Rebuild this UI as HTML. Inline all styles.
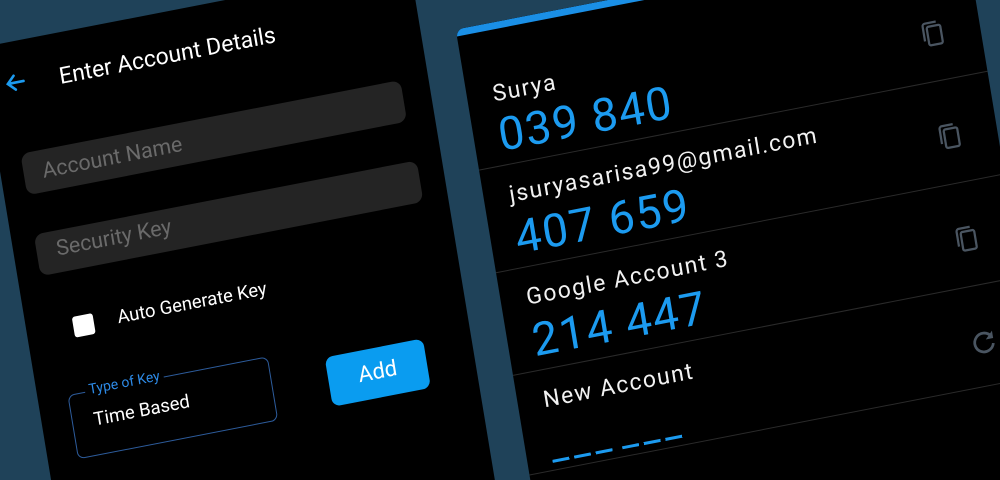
<!DOCTYPE html>
<html><head><meta charset="utf-8"><style>
html,body{margin:0;padding:0;width:1000px;height:480px;overflow:hidden;}
body{background:#1f4259;position:relative;font-family:"Roboto","Liberation Sans",sans-serif;}
#clip{position:absolute;left:0;top:0;width:1000px;height:480px;overflow:hidden;}
#w{position:absolute;left:0;top:0;width:1000px;height:480px;transform-origin:0 0;transform:matrix(0.9816,-0.1908,0.1633,0.9866,0,0);}
.a{position:absolute;}
.lp{left:-28px;top:43px;width:438px;height:620px;background:#000;}
.rp{left:445px;top:116px;width:518px;height:560px;background:#000;border-top-left-radius:8px;overflow:hidden;}
.field{background:#242424;border-radius:9px;height:42px;}
.ph{color:#6a6a6a;font-size:21.5px;white-space:nowrap;}
.div{left:0;width:518px;height:1px;background:#2a2a2a;}
.nm{color:#f2f2f2;font-size:23px;letter-spacing:1.5px;white-space:nowrap;line-height:1;}
.cd{color:#1c9bf0;font-size:46px;letter-spacing:1.5px;white-space:nowrap;line-height:1;}
.ic{width:30px;height:30px;}
</style></head><body>
<div id="clip">
<div id="w">
  <div class="a lp"></div>
  <svg class="a" style="left:-9px;top:73px" width="22" height="22" viewBox="0 0 22 22"><path d="M19 11H4M10 4L3 11l7 7" stroke="#1c9bf0" stroke-width="2.6" fill="none" stroke-linecap="round"/></svg>
  <div class="a" style="left:46px;top:73px;color:#fff;font-size:23px;white-space:nowrap;">Enter Account Details</div>
  <div class="a field" style="left:-5px;top:155px;width:387px;"></div>
  <div class="a ph" style="left:14px;top:164px;">Account Name</div>
  <div class="a field" style="left:-5px;top:237px;width:390px;"></div>
  <div class="a ph" style="left:15px;top:243px;">Security Key</div>
  <div class="a" style="left:19px;top:325px;width:21px;height:21px;background:#fff;border-radius:3px;"></div>
  <div class="a" style="left:64px;top:323px;color:#fff;font-size:18.5px;white-space:nowrap;">Auto Generate Key</div>
  <div class="a" style="left:2px;top:401px;width:202px;height:63px;border:1px solid #2d5c9c;border-radius:7px;"></div>
  <div class="a" style="left:20px;top:392px;background:#000;padding:0 4px;color:#2d8ae6;font-size:14px;white-space:nowrap;">Type of Key</div>
  <div class="a" style="left:24px;top:419px;color:#fff;font-size:18.5px;white-space:nowrap;">Time Based</div>
  <div class="a" style="left:262px;top:413px;width:100px;height:50px;background:#0a9cf0;border-radius:8px;color:#fff;font-size:22px;text-align:center;line-height:50px;">Add</div>

  <div class="a rp">
    <div class="a" style="left:0;top:0;width:518px;height:7px;background:#1a8fe6;"></div>
    <div class="a div" style="top:142px"></div>
    <div class="a div" style="top:246px"></div>
    <div class="a div" style="top:350px"></div>
    <div class="a div" style="top:451px"></div>
    <div class="a nm" style="left:26px;top:59px">Surya</div>
    <div class="a cd" style="left:25px;top:90px">039 840</div>
    <div class="a nm" style="left:26px;top:161px">jsuryasarisa99@gmail.com</div>
    <div class="a cd" style="left:25px;top:194px">407 659</div>
    <div class="a nm" style="left:26px;top:265px">Google Account 3</div>
    <div class="a cd" style="left:25px;top:298px">214 447</div>
    <div class="a nm" style="left:26px;top:369px">New Account</div>
    <div class="a" style="left:25px;top:441px;width:62px;height:3px;background:repeating-linear-gradient(90deg,#1c9bf0 0 17px,transparent 17px 22px);"></div>
    <div class="a" style="left:96px;top:441px;width:62px;height:3px;background:repeating-linear-gradient(90deg,#1c9bf0 0 17px,transparent 17px 22px);"></div>
    <svg class="a ic" style="left:455px;top:80px" viewBox="0 0 24 24"><path d="M5 17V5a2 2 0 0 1 2-2h9" stroke="#4a5561" stroke-width="1.8" fill="none"/><rect x="8" y="6" width="11" height="15" rx="1.5" stroke="#4a5561" stroke-width="1.8" fill="none"/></svg>
    <svg class="a ic" style="left:455px;top:184px" viewBox="0 0 24 24"><path d="M5 17V5a2 2 0 0 1 2-2h9" stroke="#4a5561" stroke-width="1.8" fill="none"/><rect x="8" y="6" width="11" height="15" rx="1.5" stroke="#4a5561" stroke-width="1.8" fill="none"/></svg>
    <svg class="a ic" style="left:455px;top:288px" viewBox="0 0 24 24"><path d="M5 17V5a2 2 0 0 1 2-2h9" stroke="#4a5561" stroke-width="1.8" fill="none"/><rect x="8" y="6" width="11" height="15" rx="1.5" stroke="#4a5561" stroke-width="1.8" fill="none"/></svg>
    <svg class="a ic" style="left:455px;top:393px" viewBox="0 0 24 24"><path d="M18.5 8A7.5 7.5 0 1 0 19.5 14" stroke="#4a5561" stroke-width="2.2" fill="none"/><path d="M20 4v6h-6z" fill="#4a5561"/></svg>
  </div>
</div>
</div>
</body></html>
